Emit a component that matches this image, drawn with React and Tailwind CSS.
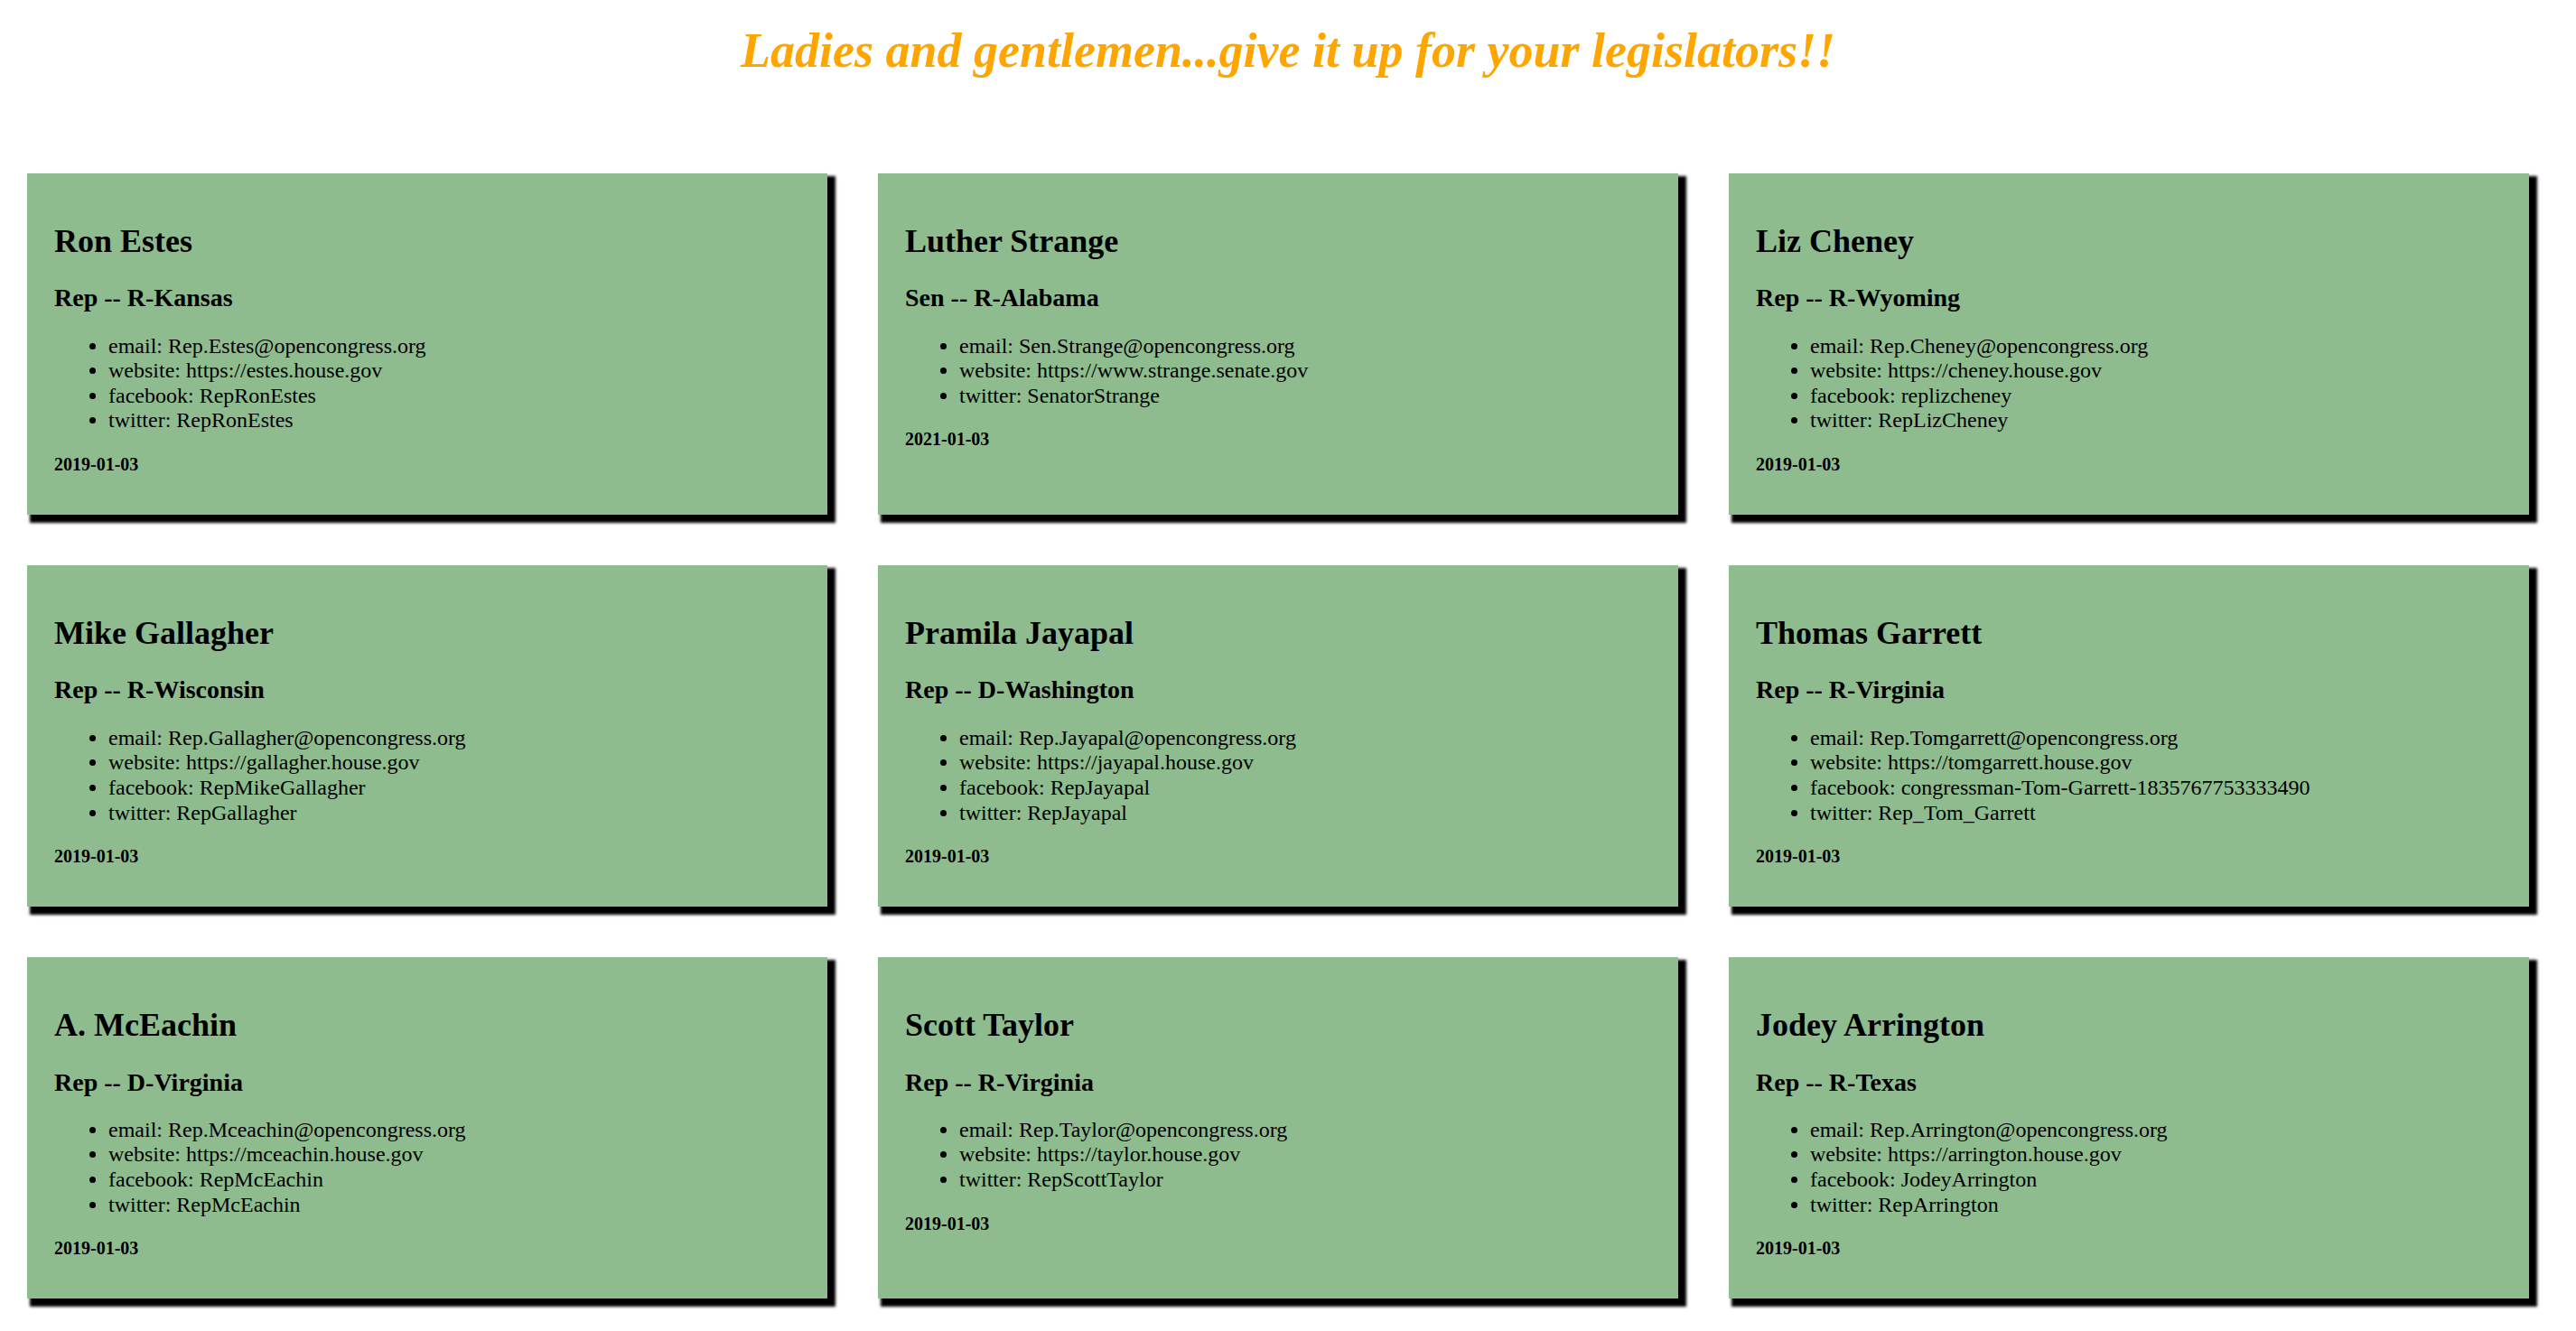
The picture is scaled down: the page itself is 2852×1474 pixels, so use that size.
import React from "react";

const people = [
  {
    name: "Ron Estes",
    role: "Rep -- R-Kansas",
    items: [
      ["email", "Rep.Estes@opencongress.org"],
      ["website", "https://estes.house.gov"],
      ["facebook", "RepRonEstes"],
      ["twitter", "RepRonEstes"],
    ],
    date: "2019-01-03",
  },
  {
    name: "Luther Strange",
    role: "Sen -- R-Alabama",
    items: [
      ["email", "Sen.Strange@opencongress.org"],
      ["website", "https://www.strange.senate.gov"],
      ["twitter", "SenatorStrange"],
    ],
    date: "2021-01-03",
  },
  {
    name: "Liz Cheney",
    role: "Rep -- R-Wyoming",
    items: [
      ["email", "Rep.Cheney@opencongress.org"],
      ["website", "https://cheney.house.gov"],
      ["facebook", "replizcheney"],
      ["twitter", "RepLizCheney"],
    ],
    date: "2019-01-03",
  },
  {
    name: "Mike Gallagher",
    role: "Rep -- R-Wisconsin",
    items: [
      ["email", "Rep.Gallagher@opencongress.org"],
      ["website", "https://gallagher.house.gov"],
      ["facebook", "RepMikeGallagher"],
      ["twitter", "RepGallagher"],
    ],
    date: "2019-01-03",
  },
  {
    name: "Pramila Jayapal",
    role: "Rep -- D-Washington",
    items: [
      ["email", "Rep.Jayapal@opencongress.org"],
      ["website", "https://jayapal.house.gov"],
      ["facebook", "RepJayapal"],
      ["twitter", "RepJayapal"],
    ],
    date: "2019-01-03",
  },
  {
    name: "Thomas Garrett",
    role: "Rep -- R-Virginia",
    items: [
      ["email", "Rep.Tomgarrett@opencongress.org"],
      ["website", "https://tomgarrett.house.gov"],
      ["facebook", "congressman-Tom-Garrett-1835767753333490"],
      ["twitter", "Rep_Tom_Garrett"],
    ],
    date: "2019-01-03",
  },
  {
    name: "A. McEachin",
    role: "Rep -- D-Virginia",
    items: [
      ["email", "Rep.Mceachin@opencongress.org"],
      ["website", "https://mceachin.house.gov"],
      ["facebook", "RepMcEachin"],
      ["twitter", "RepMcEachin"],
    ],
    date: "2019-01-03",
  },
  {
    name: "Scott Taylor",
    role: "Rep -- R-Virginia",
    items: [
      ["email", "Rep.Taylor@opencongress.org"],
      ["website", "https://taylor.house.gov"],
      ["twitter", "RepScottTaylor"],
    ],
    date: "2019-01-03",
  },
  {
    name: "Jodey Arrington",
    role: "Rep -- R-Texas",
    items: [
      ["email", "Rep.Arrington@opencongress.org"],
      ["website", "https://arrington.house.gov"],
      ["facebook", "JodeyArrington"],
      ["twitter", "RepArrington"],
    ],
    date: "2019-01-03",
  },
];

function Card({ p }) {
  return (
    <div className="bg-[#8fbc8f] text-black pt-[55px] pb-[44px] px-[30px] shadow-[6px_6px_3px_3px_#000]">
      <h2 className="text-[36px] leading-[41.4px] font-bold mb-[26px]">{p.name}</h2>
      <h3 className="text-[28px] leading-[32.3px] font-bold mb-[23px]">{p.role}</h3>
      <ul className="list-disc pl-[60px] text-[24px] leading-[27.6px] mb-[23px]">
        {p.items.map(([k, v]) => (
          <li key={k}>
            {k}: {v}
          </li>
        ))}
      </ul>
      <h5 className="text-[20px] leading-[23px] font-bold">{p.date}</h5>
    </div>
  );
}

export default function App() {
  return (
    <div className="min-h-screen bg-white font-['Liberation_Serif','Times_New_Roman',serif] pb-[36px]">
      <h1 className="pt-[25px] text-center text-[54px] leading-[62px] font-bold italic text-[#ffa500]">
        Ladies and gentlemen...give it up for your legislators!!
      </h1>
      <div className="mt-[105px] grid grid-cols-3 gap-x-[56px] gap-y-[56px] pl-[30px] pr-[52px]">
        {people.map((p) => (
          <Card key={p.name} p={p} />
        ))}
      </div>
    </div>
  );
}
